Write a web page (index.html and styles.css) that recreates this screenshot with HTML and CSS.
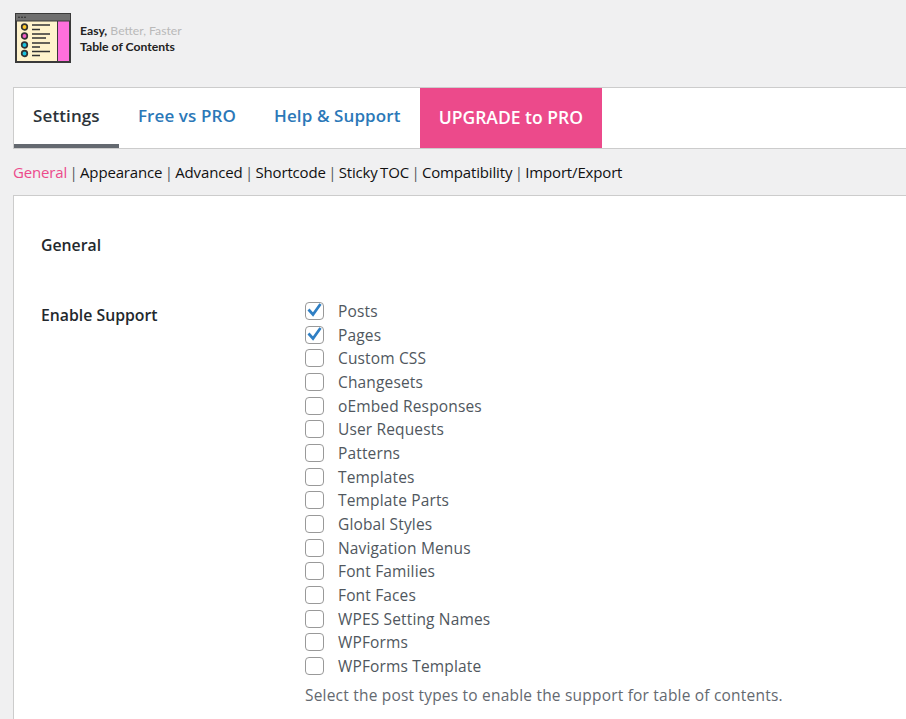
FILE: index.html
```html
<!DOCTYPE html>
<html lang="en">

<head>
    <meta charset="UTF-8">
    <meta name="viewport" content="width=device-width, initial-scale=1.0">
    <title>Easy Table of Contents</title>
    <link rel="stylesheet" href="styles.css">
</head>

<body>
    <div class="brand">
        <svg class="logo" width="58" height="52" viewBox="0 0 58 52">
            <rect x="1" y="1" width="56" height="50" fill="#3a3a3a"/>
            <rect x="2" y="2" width="54" height="6.500" fill="#6f6f6f"/>
            <rect x="3" y="9.500" width="40" height="39.500" fill="#fff3cc"/>
            <rect x="44" y="9.500" width="11" height="39.500" fill="#ff6fdc"/>
            <g fill="#222">
                <circle cx="5" cy="5.300" r=".8"/><circle cx="8" cy="5.300" r=".8"/><circle cx="11" cy="5.300" r=".8"/>
            </g>
            <g stroke="#333" stroke-width="1.700">
                <circle cx="10.500" cy="15" r="2.800" fill="#ffc928"/>
                <circle cx="10.500" cy="24" r="2.800" fill="#f25cc4"/>
                <circle cx="10.500" cy="33" r="2.800" fill="#19c3e0"/>
                <circle cx="10.500" cy="41.500" r="2.800" fill="#19c3e0"/>
                <path d="M18 13h18M18 17.500h8M18 22h18M18 26h14M18 31h18M18 35h8M18 39.500h18M18 43.500h8" fill="none"/>
            </g>
        </svg>
        <div class="brand-text">
            <div class="tagline"><b>Easy,</b> Better, Faster</div>
            <div class="product">Table of Contents</div>
        </div>
    </div>

    <div class="tabs">
        <a class="tab active">Settings</a>
        <a class="tab">Free vs PRO</a>
        <a class="tab">Help &amp; Support</a>
        <a class="tab upgrade">UPGRADE to PRO</a>
    </div>

    <div class="subnav">
        <a class="current">General</a> | <a>Appearance</a> | <a>Advanced</a> | <a>Shortcode</a> | <a>Sticky TOC</a> | <a>Compatibility</a> | <a>Import/Export</a>
    </div>

    <div class="panel">
        <h3 class="section-title">General</h3>
        <div class="field">
            <div class="field-label">Enable Support</div>
            <div>
                <ul class="checks" id="checks"></ul>
                <p class="hint">Select the post types to enable the support for table of contents.</p>
            </div>
        </div>
    </div>

    <script>
        const types = ["Posts", "Pages", "Custom CSS", "Changesets", "oEmbed Responses", "User Requests", "Patterns", "Templates", "Template Parts", "Global Styles", "Navigation Menus", "Font Families", "Font Faces", "WPES Setting Names", "WPForms", "WPForms Template"];
        const tick = `<svg class="tick" width="19" height="18" viewBox="0 0 19 18"><path d="M3.500 8.500L8 13.500L15.500 3" fill="none" stroke="#2f7fc4" stroke-width="2.700"/></svg>`;
        const checks = document.getElementById("checks");

        types.forEach((type, i) => {
            const row = document.createElement("li");
            row.innerHTML = `<span class="box">${i < 2 ? tick : ""}</span>${type}`;
            checks.appendChild(row);
        });
    </script>
</body>

</html>
```

FILE: styles.css
```css
html, body {
    height: 100%;
    overflow: hidden;
}

body {
    margin: 0;
    background: #f0f0f1;
    font-family: "Open Sans", "Noto Sans", sans-serif;
    color: #3c434a;
}

/* Logo row */
.brand {
    display: flex;
    align-items: center;
    gap: 8px;
    height: 87px;
    padding-left: 14px;
    padding-bottom: 12px;
    box-sizing: border-box;
}

.brand-text {
    font-family: Lato, sans-serif;
    font-size: 12.200px;
    line-height: 16px;
    padding-top: 2px;
    color: #b9b9b9;
}

.tagline b,
.product {
    color: #222;
    font-weight: 700;
}

/* Tabs */
.tabs {
    display: flex;
    height: 60px;
    margin-left: 13px;
    background: #fff;
    border: 1px solid #ccc;
    border-right: 0;
}

.tab {
    padding: 16px 19.100px 0;
    font-size: 17px;
    font-weight: 600;
    letter-spacing: 0.1px;
    color: #2b78b8;
    box-sizing: border-box;
}

.tab.active {
    color: #2c3338;
    border-bottom: 4px solid #646970;
}

.upgrade {
    background: #ec4a8b;
    color: #fff;
    font-size: 17.500px;
    letter-spacing: 0;
    padding-top: 17px;
}

/* Sub navigation */
.subnav {
    margin: 12px 0 11px 13px;
    height: 23px;
    font-size: 15px;
    line-height: 23px;
    letter-spacing: -0.16px;
    word-spacing: -1.300px;
    color: #50575e;
}

.subnav a {
    color: #111;
}

.subnav .current {
    color: #ec4a8b;
}

/* Settings panel */
.panel {
    margin-left: 13px;
    background: #fff;
    border: 1px solid #ccc;
    border-right: 0;
    padding: 38px 27px;
    height: 600px;
}

.section-title {
    margin: 0 0 43px;
    font-size: 15.800px;
    line-height: 22px;
    font-weight: 600;
    color: #23282d;
}

.field {
    display: grid;
    grid-template-columns: 264px 1fr;
}

.field-label {
    padding-top: 4px;
    font-size: 15.800px;
    line-height: 24px;
    font-weight: 600;
    color: #23282d;
}

.checks {
    list-style: none;
    margin: 0;
    padding: 0;
}

.checks li {
    display: flex;
    align-items: center;
    height: 23.700px;
    font-size: 15.500px;
    letter-spacing: 0.15px;
    color: #50575e;
}

.box {
    flex: none;
    width: 19px;
    height: 18px;
    margin-right: 14px;
    box-sizing: border-box;
    background: #fff;
    border: 1.500px solid #999;
    border-radius: 4px;
    position: relative;
}

.tick {
    position: absolute;
    left: -1.500px;
    top: -1.500px;
}

.hint {
    margin: 6px 0 0;
    font-size: 15.500px;
    line-height: 22px;
    letter-spacing: 0.2px;
    color: #646970;
}
```
